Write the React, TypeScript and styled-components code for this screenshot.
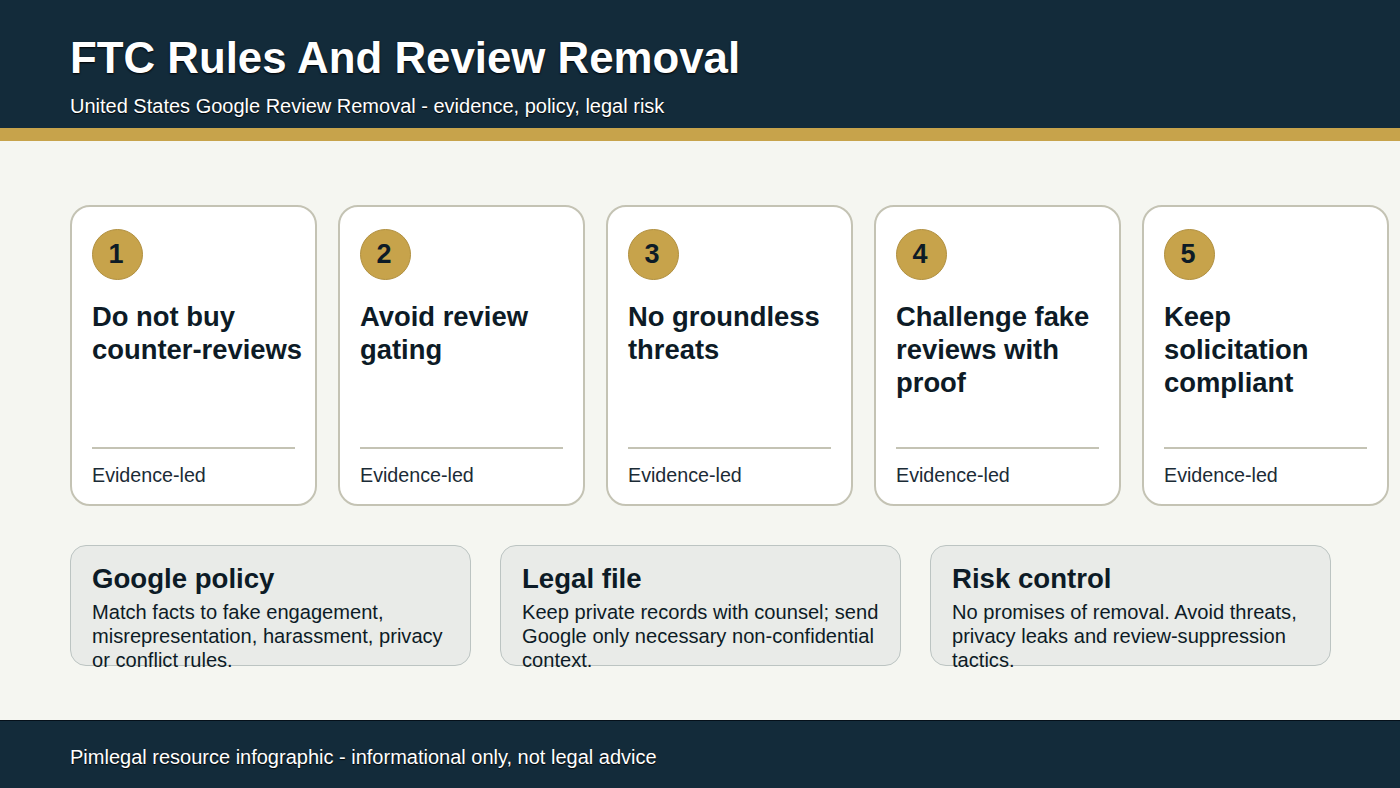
import React from "react";
import styled, { createGlobalStyle } from "styled-components";

const Global = createGlobalStyle`
  html, body { margin: 0; padding: 0; background: #f5f6f1; }
  body { font-family: "Liberation Sans", Arial, sans-serif; }
  * { box-sizing: border-box; }
`;

const Page = styled.div`
  width: 1400px;
  height: 788px;
  overflow: hidden;
  display: flex;
  flex-direction: column;
  background: #f5f6f1;
`;

const Header = styled.header`
  height: 141px;
  flex: none;
  background: #132b3a;
  border-bottom: 13px solid #c7a34b;
  padding: 34px 70px 0;
`;

const Title = styled.h1`
  margin: 0;
  font-size: 43.8px;
  line-height: 48px;
  font-weight: 700;
  color: #fff;
  text-shadow: 0 1px 2px #000;
`;

const Subtitle = styled.p`
  margin: 12px 0 0;
  font-size: 20px;
  line-height: 24px;
  color: #fff;
  text-shadow: 0 1px 1px #000;
`;

const Main = styled.main`
  flex: 1;
  padding: 64px 0 0 70px;
  display: flex;
  flex-direction: column;
  gap: 39px;
`;

const CardRow = styled.div`
  display: flex;
  gap: 21px;
`;

const Card = styled.article`
  width: 247px;
  height: 301px;
  flex: none;
  display: flex;
  flex-direction: column;
  padding: 22px 20px 17px 20px;
  background: #fff;
  border: 2px solid #c4c3b4;
  border-radius: 20px;
`;

const Badge = styled.div`
  width: 51px;
  height: 51px;
  padding: 0 3px 0 0;
  border-radius: 50%;
  display: flex;
  align-items: center;
  justify-content: center;
  background: #c7a34b;
  border: 1px solid #b08f3f;
  font-size: 27px;
  font-weight: 700;
  color: #0d1b26;
`;

const CardTitle = styled.h2`
  margin: 20px 0 0;
  flex: 1;
  font-size: 27.4px;
  line-height: 33px;
  font-weight: 700;
  color: #0d1b26;
`;

const TitleLine = styled.span`
  display: block;
  white-space: nowrap;
`;

const CardFoot = styled.div`
  border-top: 2px solid #c4c3b4;
  padding-top: 14px;
  font-size: 19.7px;
  line-height: 24px;
  color: #1b2b36;
`;

const InfoRow = styled.div`
  display: flex;
  gap: 29px;
`;

const InfoBox = styled.section`
  width: 401px;
  height: 121px;
  flex: none;
  padding: 17px 20px 0 21px;
  background: #e9ebe8;
  border: 1px solid #bcc4c2;
  border-radius: 16px;
`;

const InfoTitle = styled.h3`
  margin: 0;
  font-size: 27.6px;
  line-height: 32px;
  font-weight: 700;
  color: #0d1b26;
`;

const InfoText = styled.p`
  margin: 5px 0 0;
  font-size: 20.1px;
  line-height: 24px;
  color: #0d1b26;
`;

const Footer = styled.footer`
  height: 68px;
  flex: none;
  display: flex;
  align-items: center;
  padding: 5px 70px 0;
  background: #132b3a;
  border-top: 1px solid #05101a;
  font-size: 20px;
  color: #fff;
  text-shadow: 0 1px 1px #000;
`;

const cards = [
  ["Do not buy", "counter-reviews"],
  ["Avoid review", "gating"],
  ["No groundless", "threats"],
  ["Challenge fake", "reviews with", "proof"],
  ["Keep", "solicitation", "compliant"],
];

const boxes = [
  ["Google policy", "Match facts to fake engagement, misrepresentation, harassment, privacy or conflict rules."],
  ["Legal file", "Keep private records with counsel; send Google only necessary non-confidential context."],
  ["Risk control", "No promises of removal. Avoid threats, privacy leaks and review-suppression tactics."],
];

export default function App() {
  return (
    <Page>
      <Global />
      <Header>
        <Title>FTC Rules And Review Removal</Title>
        <Subtitle>United States Google Review Removal - evidence, policy, legal risk</Subtitle>
      </Header>
      <Main>
        <CardRow>
          {cards.map((lines, i) => (
            <Card key={lines[0]}>
              <Badge>{i + 1}</Badge>
              <CardTitle>
                {lines.map((l) => (
                  <TitleLine key={l}>{l}</TitleLine>
                ))}
              </CardTitle>
              <CardFoot>Evidence-led</CardFoot>
            </Card>
          ))}
        </CardRow>
        <InfoRow>
          {boxes.map(([t, d]) => (
            <InfoBox key={t}>
              <InfoTitle>{t}</InfoTitle>
              <InfoText>{d}</InfoText>
            </InfoBox>
          ))}
        </InfoRow>
      </Main>
      <Footer>Pimlegal resource infographic - informational only, not legal advice</Footer>
    </Page>
  );
}
